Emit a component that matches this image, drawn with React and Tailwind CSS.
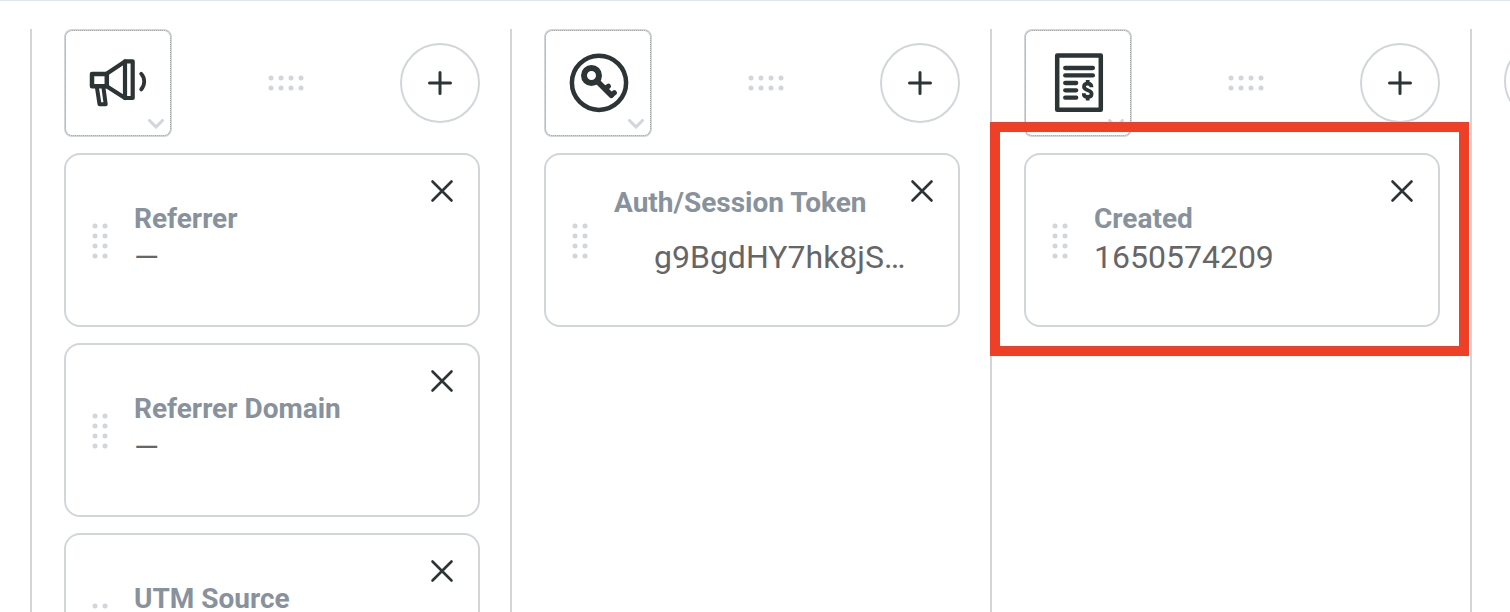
import React from "react";

function Megaphone() {
  return (
    <svg viewBox="0 0 60 60" className="size-[60px] overflow-visible" fill="none" stroke="#2d3436" strokeWidth="4" strokeLinecap="round" strokeLinejoin="round" aria-hidden="true">
      <path d="M4 21h14.800v12.200H4z" strokeWidth="4.500" />
      <path d="M19 20.500L37 8.500M19 33.500L37 45" strokeWidth="4.200" />
      <path d="M37 8.400h7.700v36.600H37z" strokeWidth="4.200" />
      <path d="M9 35l2.500 16.300h6.200L15.500 35" />
      <path d="M53.200 20.800c4 4.300 4 11.300 0 15.600" strokeWidth="3.800" />
    </svg>
  );
}

function KeyCircle() {
  return (
    <svg viewBox="0 0 60 60" className="size-[60px] overflow-visible" fill="none" stroke="#2d3436" strokeLinecap="round" strokeLinejoin="round" aria-hidden="true">
      <circle cx="31" cy="29.800" r="27.100" strokeWidth="4.500" />
      <circle cx="23.500" cy="22.500" r="7.500" strokeWidth="6" />
      <path d="M29 28L43.300 42.300" strokeWidth="5.600" />
      <path d="M37 35.500L40.300 33.300M43.500 42L46.300 39.800" strokeWidth="5.200" />
    </svg>
  );
}

function Invoice() {
  return (
    <svg viewBox="0 0 60 60" className="size-[60px] overflow-visible" fill="none" stroke="#2d3436" strokeLinecap="round" strokeLinejoin="round" aria-hidden="true">
      <path d="M9.200 2.500h43.600v54.300H9.200z" strokeWidth="4.500" />
      <path d="M17.200 15h27.700M17.200 22.400h27.700M17.200 30h11M17.200 37.300h11M17.200 44.700h11" strokeWidth="4.300" />
      <path d="M43.500 34.300c0-2.400-1.400-3.700-3.700-3.700s-3.800 1.200-3.800 3.100c0 4.400 7.600 2.600 7.600 7 0 2-1.500 3.300-3.900 3.300s-4-1.400-4-3.800M39.700 27v3M39.700 44v3.500" strokeWidth="3.800" strokeLinecap="butt" />
    </svg>
  );
}

function Dots({ cols, rows, size }) {
  const dots = [];
  for (let r = 0; r < rows; r++)
    for (let c = 0; c < cols; c++)
      dots.push(<circle key={`${r}-${c}`} cx={c * size + 3} cy={r * size + 3} r="2.500" />);
  const w = (cols - 1) * size + 6;
  const h = (rows - 1) * size + 6;
  return (
    <svg width={w} height={h} viewBox={`0 0 ${w} ${h}`} fill="#d0d6da" className="shrink-0" aria-hidden="true">
      {dots}
    </svg>
  );
}

function RoundAdd({ label }) {
  return (
    <button type="button" aria-label={label} className="flex size-20 shrink-0 items-center justify-center rounded-full border-2 border-[#d0d6da]">
      <svg viewBox="0 0 24 24" className="size-6" stroke="#2d3436" strokeWidth="3" strokeLinecap="round" aria-hidden="true">
        <path d="M12 1.500v21M1.500 12h21" />
      </svg>
    </button>
  );
}

function Card({ label, value, indented, highlighted }) {
  return (
    <li className="relative">
      <article className="relative flex h-[174px] items-center gap-[26px] rounded-2xl border-2 border-[#d0d6da] pt-[2px] pr-6 pl-[26px]">
        <Dots cols={2} rows={4} size={10} />
        <div className={indented ? "min-w-0 pb-4" : "min-w-0"}>
          <h3 className="text-[28px] leading-8 font-bold whitespace-nowrap text-[#87929d]">{label}</h3>
          <p className={indented ? "mt-4 pl-10 text-[32px] leading-[44px] whitespace-nowrap text-[#666666]" : "text-[32px] leading-[44px] text-[#666666]"}>
            {value}
          </p>
        </div>
        <button type="button" aria-label={`Remove ${label}`} className="absolute top-6 right-6 flex size-6 items-center justify-center">
          <svg viewBox="0 0 24 24" className="size-6" stroke="#2d3436" strokeWidth="2.600" strokeLinecap="round" aria-hidden="true">
            <path d="M2.500 2.500l19 19M21.500 2.500l-19 19" />
          </svg>
        </button>
      </article>
      {highlighted && (
        <div className="pointer-events-none absolute -top-[31px] -right-[29px] -bottom-[29px] -left-[34px] border-10 border-[#ed4027]" />
      )}
    </li>
  );
}

const columns = [
  {
    name: "Marketing",
    icon: <Megaphone />,
    cards: [
      { label: "Referrer", value: "—" },
      { label: "Referrer Domain", value: "—" },
      { label: "UTM Source", value: "—" },
    ],
  },
  {
    name: "Authentication",
    icon: <KeyCircle />,
    cards: [{ label: "Auth/Session Token", value: "g9BgdHY7hk8jS…", indented: true }],
  },
  {
    name: "Billing",
    icon: <Invoice />,
    cards: [{ label: "Created", value: "1650574209", highlighted: true }],
  },
];

function Column({ name, icon, cards }) {
  return (
    <section aria-label={name} className="w-[480px] shrink-0 border-l-2 border-[#d0d6da] pr-[30px] pl-8">
      <header className="flex items-center justify-between">
        <button type="button" aria-label={`${name} icon`} className="relative flex size-[108px] items-center justify-center rounded-lg border-2 border-[#d0d6da] outline-1 -outline-offset-2 outline-[#a4a9ac] outline-dotted">
          {icon}
          <svg viewBox="0 0 16 10" className="absolute right-[6px] bottom-[6px] h-[10px] w-4" fill="none" stroke="#d0d6da" strokeWidth="3" strokeLinecap="round" aria-hidden="true">
            <path d="M1.500 1.500L8 8l6.500-6.500" />
          </svg>
        </button>
        <Dots cols={4} rows={2} size={10} />
        <RoundAdd label={`Add to ${name}`} />
      </header>
      <ul className="mt-4 flex flex-col gap-4">
        {cards.map((card) => (
          <Card key={card.label} {...card} />
        ))}
      </ul>
    </section>
  );
}

export default function App() {
  return (
    <main className="flex h-screen overflow-hidden border-t border-[#dfe7ee] bg-white pt-7 pl-[30px] font-['Roboto',sans-serif]">
      {columns.map((column) => (
        <Column key={column.name} {...column} />
      ))}
      <section aria-label="New column" className="shrink-0 border-l-2 border-[#d0d6da] pt-3 pl-8">
        <RoundAdd label="Add column" />
      </section>
    </main>
  );
}
